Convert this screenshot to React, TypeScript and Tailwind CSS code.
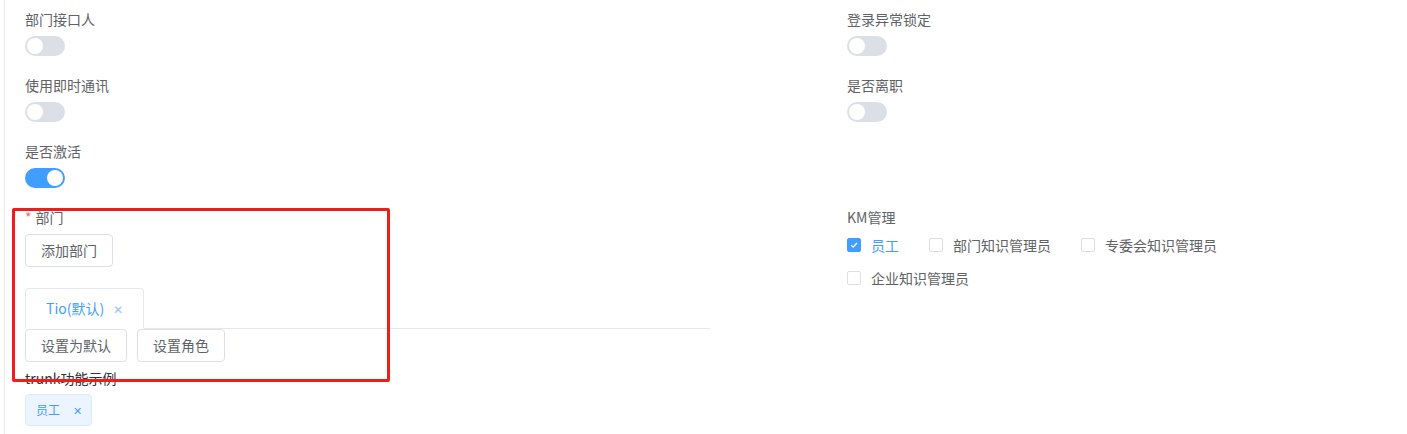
import React from "react";

const font = { fontFamily: '"Noto Sans CJK SC", "Noto Sans", "Liberation Sans", sans-serif' };

function Switch({ on }: { on?: boolean }) {
  return (
    <div
      className={`relative h-[20px] w-[40px] rounded-full ${on ? "bg-[#409eff]" : "bg-[#dcdfe6]"}`}
    >
      <div
        className={`absolute top-[2px] h-[16px] w-[16px] rounded-full bg-white ${on ? "left-[22px]" : "left-[2px]"}`}
      />
    </div>
  );
}

function Label({ children }: { children: React.ReactNode }) {
  return <div className="h-[20px] text-[14px] leading-[19px] text-[#606266]">{children}</div>;
}

function SwitchItem({ label, on }: { label: string; on?: boolean }) {
  return (
    <div className="mb-[20px]">
      <Label>{label}</Label>
      <div className="mt-[6px]">
        <Switch on={on} />
      </div>
    </div>
  );
}

function Btn({ children }: { children: React.ReactNode }) {
  return (
    <div className="flex h-[33px] items-center rounded-[4px] border border-[#dcdfe6] bg-white px-[15px] text-[14px] text-[#606266]">
      {children}
    </div>
  );
}

function Check({ on, label }: { on?: boolean; label: string }) {
  return (
    <div className="mr-[30px] flex h-[20px] items-center">
      <div
        className={`flex h-[14px] w-[14px] items-center justify-center rounded-[2px] border ${on ? "border-[#409eff] bg-[#409eff]" : "border-[#dcdfe6] bg-white"}`}
      >
        {on && (
          <svg width="10" height="10" viewBox="0 0 10 10">
            <path d="M2.2 5.2 L4.2 7.1 L7.9 3" stroke="white" strokeWidth="1.3" fill="none" />
          </svg>
        )}
      </div>
      <span className={`ml-[10px] text-[14px] leading-[20px] ${on ? "text-[#409eff]" : "text-[#606266]"}`}>
        {label}
      </span>
    </div>
  );
}

export default function App() {
  return (
    <div className="relative h-[434px] w-[1407px] overflow-hidden bg-white" style={font}>
      <div className="ml-[4px] h-full border-l border-[#ebebeb] pl-[20px] pt-[10px]">
        <div className="grid grid-cols-[822px_1fr]">
          <div>
            <SwitchItem label="部门接口人" />
            <SwitchItem label="使用即时通讯" />
            <SwitchItem label="是否激活" on />
            <div>
              <Label>
                <span className="mr-[4px] text-[#f56c6c]">*</span>部门
              </Label>
              <div className="mt-[6px] flex">
                <Btn>添加部门</Btn>
              </div>
              <div className="mt-[21px] flex w-[685px] border-b border-[#e4e7ed]">
                <div className="-mb-px flex h-[41px] items-center rounded-t-[4px] border border-b-white border-[#e4e7ed] px-[20px] text-[14px] text-[#409eff]">
                  Tio(默认)
                  <span className="ml-[9px] text-[12px] text-[#8cc5ff]">✕</span>
                </div>
              </div>
              <div className="flex gap-[10px]">
                <Btn>设置为默认</Btn>
                <Btn>设置角色</Btn>
              </div>
              <div className="mt-[7px] h-[20px] text-[14px] leading-[19px] text-[#303133]">trunk功能示例</div>
              <div className="mt-[5px] flex">
                <div className="flex h-[32px] items-center rounded-[4px] border border-[#d9ecff] bg-[#ecf5ff] pl-[10px] pr-[9px] text-[12px] text-[#409eff]">
                  员工
                  <span className="ml-[13px] text-[11px]">✕</span>
                </div>
              </div>
            </div>
          </div>
          <div>
            <SwitchItem label="登录异常锁定" />
            <SwitchItem label="是否离职" />
            <div className="mb-[20px] h-[46px]" />
            <Label>KM管理</Label>
            <div className="mt-[7px] flex flex-wrap gap-y-[13px] w-[420px]">
              <Check on label="员工" />
              <Check label="部门知识管理员" />
              <Check label="专委会知识管理员" />
              <Check label="企业知识管理员" />
            </div>
          </div>
        </div>
      </div>
      <div className="absolute left-[12px] top-[208px] h-[174px] w-[378px] rounded-[2px] border-[3px] border-[#f21c1c]" />
    </div>
  );
}
